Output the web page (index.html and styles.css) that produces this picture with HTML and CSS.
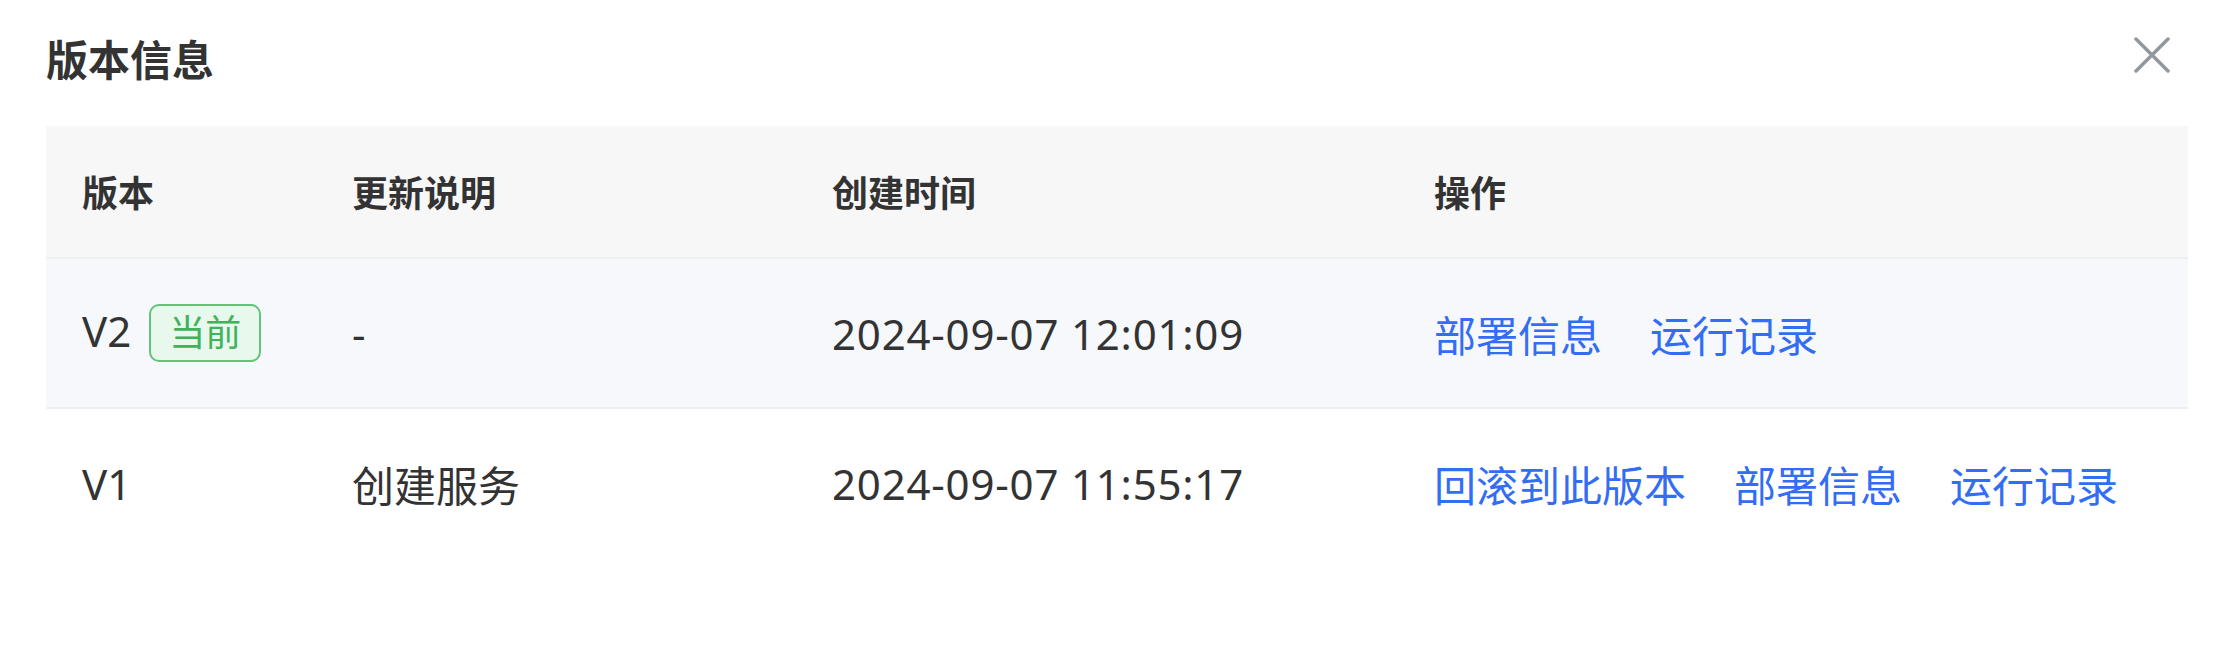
FILE: index.html
```html
<!DOCTYPE html>
<html lang="zh-CN">
<head>
    <meta charset="UTF-8">
    <meta name="viewport" content="width=device-width, initial-scale=1.0">
    <title>版本信息</title>
    <link rel="stylesheet" href="styles.css">
</head>
<body>
    <div class="dialog">
        <div class="dialog-header">
            <h2 class="dialog-title">版本信息</h2>
            <button class="close-btn" type="button" aria-label="关闭">
                <svg width="36" height="36" viewBox="0 0 36 36">
                    <path d="M2 2 L34 34 M34 2 L2 34" stroke="#92979e" stroke-width="3.5" stroke-linecap="round" fill="none"/>
                </svg>
            </button>
        </div>

        <table class="version-table">
            <colgroup>
                <col class="col-version">
                <col class="col-desc">
                <col class="col-time">
                <col>
            </colgroup>
            <thead>
                <tr>
                    <th>版本</th>
                    <th>更新说明</th>
                    <th>创建时间</th>
                    <th>操作</th>
                </tr>
            </thead>
            <tbody>
                <tr class="current">
                    <td>V2<span class="tag">当前</span></td>
                    <td>-</td>
                    <td class="time">2024-09-07 12:01:09</td>
                    <td>
                        <div class="actions">
                            <a href="#">部署信息</a>
                            <a href="#">运行记录</a>
                        </div>
                    </td>
                </tr>
                <tr>
                    <td>V1</td>
                    <td>创建服务</td>
                    <td class="time">2024-09-07 11:55:17</td>
                    <td>
                        <div class="actions">
                            <a href="#">回滚到此版本</a>
                            <a href="#">部署信息</a>
                            <a href="#">运行记录</a>
                        </div>
                    </td>
                </tr>
            </tbody>
        </table>
    </div>
</body>
</html>
```

FILE: styles.css
```css
body {
    margin: 0;
    background-color: #fff;
    font-family: "Noto Sans", "Noto Sans CJK SC", sans-serif;
    color: #333;
}
.dialog {
    padding: 0 47px 0 46px;
}
.dialog-header {
    display: flex;
    justify-content: space-between;
    align-items: flex-start;
    height: 126px;
}
.dialog-title {
    margin: 39px 0 0 0;
    font-size: 42px;
    line-height: 42px;
    font-weight: bold;
    color: #333;
}
.close-btn {
    margin: 37px 18px 0 0;
    padding: 0;
    border: none;
    background: none;
    width: 36px;
    height: 36px;
    cursor: pointer;
}
.close-btn svg {
    display: block;
}
.version-table {
    width: 100%;
    border-collapse: collapse;
    table-layout: fixed;
}
.col-version {
    width: 270px;
}
.col-desc {
    width: 480px;
}
.col-time {
    width: 602px;
}
.version-table th {
    height: 131px;
    padding: 0 0 0 36px;
    text-align: left;
    font-size: 36px;
    font-weight: bold;
    color: #333;
    background-color: #f7f7f7;
    border-bottom: 2px solid #eeeff1;
}
.version-table td {
    height: 148px;
    padding: 0 0 0 36px;
    font-size: 42px;
    color: #333;
    white-space: nowrap;
}
.version-table tr.current td {
    background-color: #f7f8fc;
    border-bottom: 2px solid #eeeff2;
}
.time {
    letter-spacing: 0.8px;
}
.tag {
    display: inline-block;
    margin-left: 18px;
    padding: 0 18px;
    height: 54px;
    line-height: 54px;
    font-size: 36px;
    color: #3fb35b;
    background-color: #e9f8ed;
    border: 2px solid #62c37a;
    border-radius: 10px;
    vertical-align: middle;
    position: relative;
    top: -2px;
}
.actions {
    display: flex;
    gap: 48px;
}
.actions a {
    color: #336df4;
    text-decoration: none;
}
```
